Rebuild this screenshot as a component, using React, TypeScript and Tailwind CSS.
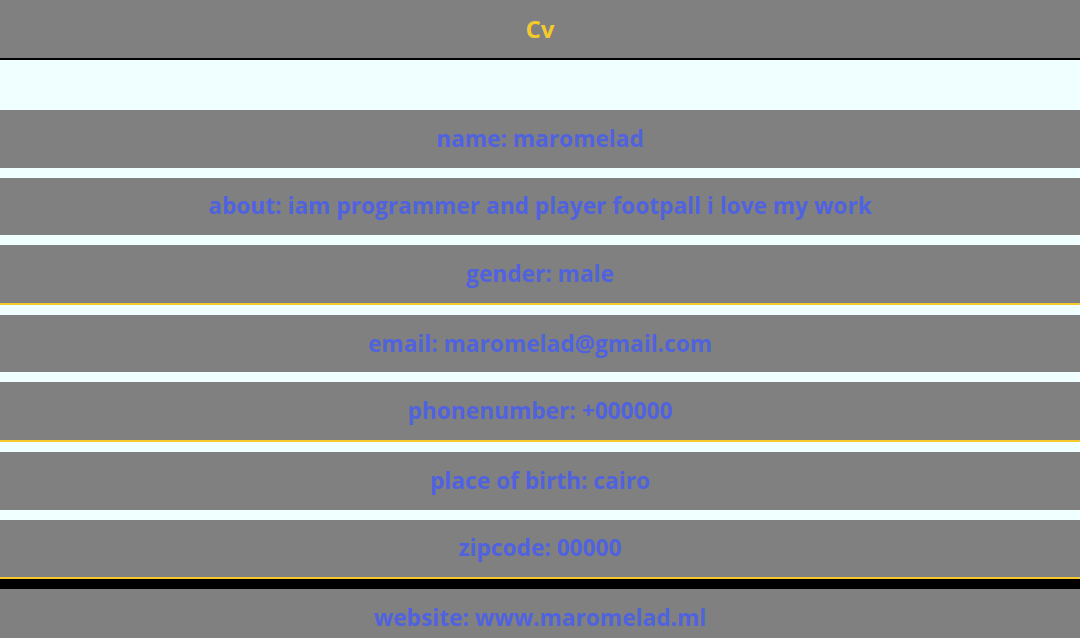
import React from "react";

const rows: { text: string; border?: "yellow" | "yellowBlack" }[] = [
  { text: "name: maromelad" },
  { text: "about: iam programmer and player footpall i love my work" },
  { text: "gender: male", border: "yellow" },
  { text: "email: maromelad@gmail.com" },
  { text: "phonenumber: +000000", border: "yellow" },
  { text: "place of birth: cairo" },
  { text: "zipcode: 00000", border: "yellowBlack" },
  { text: "website: www.maromelad.ml" },
];

export default function App() {
  return (
    <div
      className="min-h-[638px] w-full bg-[#f0ffff]"
      style={{ fontFamily: '"Open Sans", "Liberation Sans", sans-serif' }}
    >
      <header className="flex h-[60px] items-center justify-center border-b-2 border-black bg-[#808080]">
        <h1 className="text-[24px] font-bold leading-none text-[#f5c82e]">Cv</h1>
      </header>
      <div className="flex flex-col pt-[50px]">
        {rows.map((r) => (
          <div key={r.text}>
            <div
              className={
                "flex h-[57.6px] items-center justify-center bg-[#808080] text-[22.7px] font-bold text-[#5063dc] " +
                (r.border ? "border-b-2 border-[#f5c82e] box-content" : "")
              }
            >
              {r.text}
            </div>
            {r.border === "yellowBlack" ? (
              <div className="h-[10px] bg-black" />
            ) : (
              <div className="h-[10px]" />
            )}
          </div>
        ))}
      </div>
    </div>
  );
}
